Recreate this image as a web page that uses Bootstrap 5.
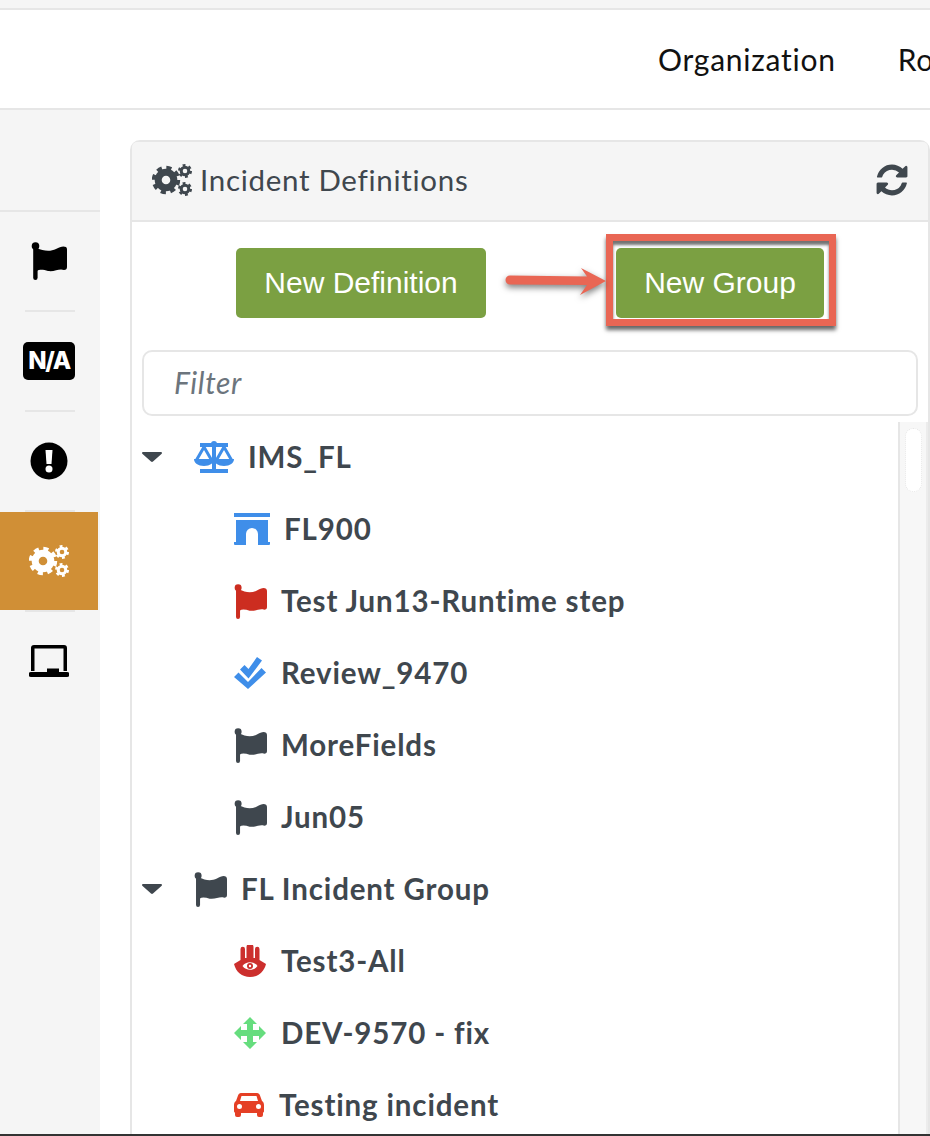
<!DOCTYPE html>
<html lang="en">
<head>
<meta charset="utf-8">
<title>Incident Definitions</title>
<link href="https://cdn.jsdelivr.net/npm/bootstrap@5.3.0/dist/css/bootstrap.min.css" rel="stylesheet">
<style>
html,body{height:1136px;overflow:hidden;background:#fff}
body{font-family:"Lato","Noto Sans",sans-serif;color:#3f474e;font-variant-ligatures:none}
.top-strip{height:10px;background:#f5f5f5;border-bottom:2px solid #e6e6e6}
.top-bar{height:100px;border-bottom:2px solid #e6e6e6;padding-left:658px;gap:62px;overflow:hidden;font-size:30px;letter-spacing:.75px;color:#111;white-space:nowrap}
.app-main{height:1024px;overflow:hidden}
.side-col{width:100px;flex:none;background:#f5f5f5}
.side-top{height:102px;border-bottom:2px solid #e6e6e6}
.side-item{height:98px;width:98px;color:#000}
.side-item.is-active{background:#d08f36;color:#fff}
.side-sep{height:2px;width:50px;margin-left:25px;background:#e6e6e6}
.na-box{width:52px;height:38px;border-radius:5px;background:#000;color:#fff;font:800 24px/38px "Inter",sans-serif;letter-spacing:-1.5px;text-align:center}
.content-col{flex:1;min-width:0;padding:30px 0 0 30px}
.def-card{height:1100px;border:2px solid #e6e6e6;border-radius:10px}
.def-card .card-header{height:80px;padding:0 18px 2px 20px;background:#f5f5f5;border-bottom:2px solid #e6e6e6;font-size:29.500px;letter-spacing:.7px;color:#3f474e}
.btn-row{padding-top:26px;gap:130px}
.btn-green{height:70px;border-radius:5px;background:#7ba042;border:0;color:#fff;font:400 30px "Liberation Sans",sans-serif;display:flex;align-items:center;justify-content:center}
.btn-def{width:250px}
.btn-grp{width:208px}
.note-box{position:absolute;left:-10px;right:-12px;top:-14px;bottom:-8px;border:7px solid #e96654;box-shadow:0 4px 4px rgba(0,0,0,.6),inset 0 4px 3px rgba(0,0,0,.55);pointer-events:none}
.note-arrow{position:absolute;left:-111px;top:16px;width:101px;height:34px;overflow:visible;filter:drop-shadow(0 3px 3px rgba(0,0,0,.5))}
.filter-box{margin:32px 10px 0;width:776px;height:66px;border:2px solid #e6e6e6;border-radius:10px;font-size:30px;font-style:italic;letter-spacing:.6px;padding:0 30px 2px}
.filter-box::placeholder{color:#6c757d}
.tree-wrap{margin-top:6px}
.tree-list{flex:1;min-width:0}
.tree-row{height:72px;font-size:29.500px;font-weight:700;letter-spacing:.85px;white-space:nowrap;padding-bottom:2px}
.tree-row.is-group{padding-left:10px}
.tree-row.is-leaf{padding-left:102px}
.caret-box{width:20px;height:10px;margin-right:32px;flex:none}
.track-col{width:30px;flex:none;background:#f7f7f7;border-left:2px solid #e6e6e6;border-right:2px solid #ececec;padding:6px 5px}
.track-thumb{height:64px;width:17px;border-radius:9px;background:#fff;border:1px dotted #e6e6e6}
.bottom-rule{height:2px;background:#333}
.clr-blue{color:#3f8ee9}.clr-red{color:#cc2d20}.clr-hand{color:#cc2f2d}.clr-green{color:#66dd7e}.clr-car{color:#e53f25}
svg{display:block;flex:none;fill:currentColor}
.ic-gap14{margin-right:14px}.ic-gap15{margin-right:15px}
</style>
</head>
<body>
<svg width="0" height="0" class="position-absolute">
<symbol id="s-cogs" viewBox="0 0 40 32">
<g fill="none" stroke="currentColor">
<circle cx="14" cy="16" r="7.800" stroke-width="7"/>
<circle cx="14" cy="16" r="12" stroke-width="4.400" stroke-dasharray="5 4.420"/>
<circle cx="33" cy="7" r="3.800" stroke-width="3"/>
<circle cx="33" cy="7" r="5.800" stroke-width="2.400" stroke-dasharray="2.800 3.270"/>
<circle cx="33" cy="25" r="3.800" stroke-width="3"/>
<circle cx="33" cy="25" r="5.800" stroke-width="2.400" stroke-dasharray="2.800 3.270"/>
</g>
</symbol>
<symbol id="s-flag" viewBox="0 0 36 38">
<circle cx="4.500" cy="4" r="3.800"/>
<rect x="2.200" y="4" width="4.400" height="34" rx="2.200"/>
<path d="M6 6C12 9 19 10 25 7 29 5 32 3.500 35 5 36 6 36 7 36 8V25C36 27 35 28 33 28 28 26 24 30 17 29 13 28 9 27 6 29Z"/>
</symbol>
</svg>

<div class="top-strip"></div>
<nav class="top-bar d-flex align-items-center">
  <span>Organization</span><span>Ro</span>
</nav>
<div class="app-main d-flex">
  <aside class="side-col">
    <div class="side-top"></div>
    <div class="side-item d-flex align-items-center justify-content-center">
      <svg width="36" height="38"><use href="#s-flag"/></svg>
    </div>
    <div class="side-sep"></div>
    <div class="side-item d-flex align-items-center justify-content-center">
      <div class="na-box">N/A</div>
    </div>
    <div class="side-sep"></div>
    <div class="side-item d-flex align-items-center justify-content-center">
      <svg width="38" height="38" viewBox="0 0 38 38"><circle cx="19" cy="19" r="18.500"/><path fill="#fff" d="M15.500 8h7l-1 14h-5z"/><circle cx="19" cy="27" r="3.500" fill="#fff"/></svg>
    </div>
    <div class="side-sep"></div>
    <div class="side-item is-active d-flex align-items-center justify-content-center">
      <svg width="40" height="32"><use href="#s-cogs"/></svg>
    </div>
    <div class="side-sep"></div>
    <div class="side-item d-flex align-items-center justify-content-center">
      <svg width="40" height="32" viewBox="0 0 40 32"><path d="M2 3a3 3 0 0 1 3-3h30a3 3 0 0 1 3 3v23h-3.500V3.500h-29V26H2z"/><path d="M18 23.500h12V27h8a2.500 2.500 0 0 1 0 5H2a2.500 2.500 0 0 1 0-5h16z"/></svg>
    </div>
  </aside>
  <main class="content-col">
    <section class="card def-card">
      <header class="card-header d-flex align-items-center justify-content-between">
        <span class="d-flex align-items-center gap-2"><svg width="40" height="32"><use href="#s-cogs"/></svg>Incident Definitions</span>
        <svg width="36" height="36" viewBox="0 0 1792 1792"><path d="M1639 1056q0 5-1 7-64 268-268 434.500t-478 166.500q-146 0-282.500-55t-243.500-157l-129 129q-19 19-45 19t-45-19-19-45v-448q0-26 19-45t45-19h448q26 0 45 19t19 45-19 45l-137 137q71 66 161 102t187 36q134 0 250-65t186-179q11-17 53-117 8-23 30-23h192q13 0 22.500 9.500t9.500 22.500zm25-800v448q0 26-19 45t-45 19h-448q-26 0-45-19t-19-45 19-45l138-138q-148-137-349-137-134 0-250 65t-186 179q-11 17-53 117-8 23-30 23h-199q-13 0-22.500-9.500t-9.500-22.500v-7q65-268 270-434.500t480-166.500q146 0 284 55.500t245 156.500l130-129q19-19 45-19t45 19 19 45z"/></svg>
      </header>
      <div class="card-body p-0">
        <div class="btn-row d-flex justify-content-center">
          <button type="button" class="btn btn-green btn-def">New Definition</button>
          <div class="position-relative">
            <button type="button" class="btn btn-green btn-grp">New Group</button>
            <div class="note-box"></div>
            <svg class="note-arrow" viewBox="0 0 101 34"><path fill="#e96654" d="M5 11.500 82 12.500 76 4 101 17 75 31 82 21 5 20.500A4.500 4.500 0 0 1 5 11.500Z"/></svg>
          </div>
        </div>
        <input class="form-control filter-box" type="text" placeholder="Filter">
        <div class="tree-wrap d-flex">
          <div class="tree-list">
            <div class="tree-row is-group d-flex align-items-center">
              <svg class="caret-box" viewBox="0 0 20 10"><path d="M1 0h18a1 1 0 0 1 .7 1.700L11 9.500a1.500 1.500 0 0 1-2 0L.3 1.700A1 1 0 0 1 1 0z"/></svg>
              <svg class="clr-blue ic-gap14" width="40" height="32" viewBox="0 0 40 32"><circle cx="20" cy="3" r="3"/><path d="M6 2h28v4H6zM18 3h4v27h-4zM6 28h28v4H6z"/><path d="M10 6 2.500 19M10 6l7.500 13M30 6l-7.500 13M30 6l7.500 13" fill="none" stroke="currentColor" stroke-width="3"/><path d="M0 18h20c0 4-4 7-10 7S0 22 0 18zM20 18h20c0 4-4 7-10 7s-10-3-10-7z"/></svg>
              <span>IMS_FL</span>
            </div>
            <div class="tree-row is-leaf d-flex align-items-center">
              <svg class="clr-blue ic-gap14" width="36" height="32" viewBox="0 0 36 32"><path d="M0 0h36v4H0zM2 7h32v22h2v2a1 1 0 0 1-1 1H24V21a6 6 0 0 0-12 0v11H1a1 1 0 0 1-1-1v-2h2z"/></svg>
              <span>FL900</span>
            </div>
            <div class="tree-row is-leaf d-flex align-items-center">
              <svg class="clr-red ic-gap14" width="33" height="35"><use href="#s-flag"/></svg>
              <span>Test Jun13-Runtime step</span>
            </div>
            <div class="tree-row is-leaf d-flex align-items-center">
              <svg class="clr-blue ic-gap15" width="32" height="32" viewBox="0 0 32 32"><path d="M0 20 4.500 15.500 14 25 27.500 11 32 15.500 14 32zM6 12.500l4.500-4.500 4 4L23 0l5 3.500-13.500 18z"/></svg>
              <span>Review_9470</span>
            </div>
            <div class="tree-row is-leaf d-flex align-items-center">
              <svg class="ic-gap14" width="33" height="35"><use href="#s-flag"/></svg>
              <span>MoreFields</span>
            </div>
            <div class="tree-row is-leaf d-flex align-items-center">
              <svg class="ic-gap14" width="33" height="35"><use href="#s-flag"/></svg>
              <span>Jun05</span>
            </div>
            <div class="tree-row is-group d-flex align-items-center">
              <svg class="caret-box" viewBox="0 0 20 10"><path d="M1 0h18a1 1 0 0 1 .7 1.700L11 9.500a1.500 1.500 0 0 1-2 0L.3 1.700A1 1 0 0 1 1 0z"/></svg>
              <svg class="ic-gap14" width="33" height="35"><use href="#s-flag"/></svg>
              <span>FL Incident Group</span>
            </div>
            <div class="tree-row is-leaf d-flex align-items-center">
              <svg class="clr-hand ic-gap15" width="32" height="32" viewBox="0 0 32 32"><path d="M6.500 4a2.200 2.200 0 0 1 4.500 0v9h1.500V2.200a2.200 2.200 0 0 1 7 0V13H21V4a2.200 2.200 0 0 1 4.500 0v11c2 1.500 4.500 2.500 6.500 4C30 27 24 32 16 32S2 27 0 19c2-1.500 4.500-2.500 6.500-4z"/><path fill="#fff" d="M8.500 21c3.500-5 11.500-5 15 0-3.500 5-11.500 5-15 0z"/><circle cx="16" cy="21" r="3" fill="#cc2f2d"/><circle cx="16" cy="21" r="1.200" fill="#fff"/></svg>
              <span>Test3-All</span>
            </div>
            <div class="tree-row is-leaf d-flex align-items-center">
              <svg class="clr-green ic-gap15" width="32" height="32" viewBox="0 0 32 32"><path d="M16 0l7 7h-4v6h6V9l7 7-7 7v-4h-6v6h4l-7 7-7-7h4v-6H7v4l-7-7 7-7v4h6V7H9z"/></svg>
              <span>DEV-9570 - fix</span>
            </div>
            <div class="tree-row is-leaf d-flex align-items-center">
              <svg class="clr-car ic-gap15" width="30" height="24" viewBox="0 0 30 24"><path fill-rule="evenodd" d="M7 0h16c1.500 0 2.500 1 3 2.500L28 8c1.500 1 2 2.500 2 4v6c0 1-.5 1.500-1 1.500V22a2 2 0 0 1-2 2h-2a2 2 0 0 1-2-2v-2H7v2a2 2 0 0 1-2 2H3a2 2 0 0 1-2-2v-2.500C.5 19.500 0 19 0 18v-6c0-1.500.5-3 2-4l2-5.500C4.500 1 5.500 0 7 0zM7.500 3 6 8h18l-1.500-5zM5.500 11a2.500 2.500 0 1 0 0 5 2.500 2.500 0 0 0 0-5zm19 0a2.500 2.500 0 1 0 0 5 2.500 2.500 0 0 0 0-5z"/></svg>
              <span>Testing incident</span>
            </div>
          </div>
          <div class="track-col"><div class="track-thumb"></div></div>
        </div>
      </div>
    </section>
  </main>
</div>
<div class="bottom-rule"></div>
<script src="https://cdn.jsdelivr.net/npm/bootstrap@5.3.0/dist/js/bootstrap.bundle.min.js"></script>
</body>
</html>
